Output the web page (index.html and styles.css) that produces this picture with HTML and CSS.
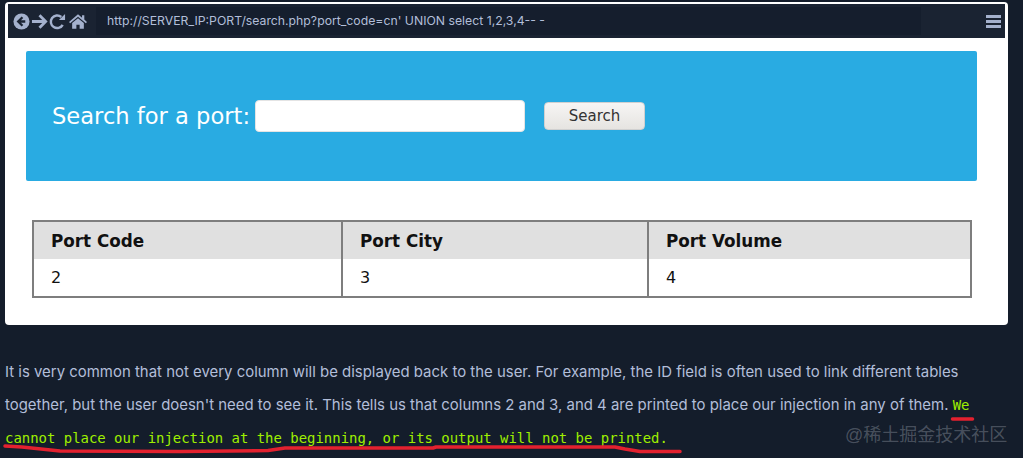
FILE: index.html
```html
<!DOCTYPE html>
<html lang="en">
<head>
<meta charset="utf-8">
<title>Search for a port</title>
<link rel="stylesheet" href="styles.css">
</head>
<body>
<div class="shot">
  <div class="toolbar">
    <div class="nav-icons">
      <svg class="icon" viewBox="0 0 18 18"><circle cx="9" cy="9" r="8.500" fill="#a4b1cd"/><path d="M10 4.500 5.500 9l4.500 4.500M6 9h7" fill="none" stroke="#1a2332" stroke-width="2.400"/></svg>
      <svg class="icon" viewBox="0 0 18 18"><path d="M9 2.500 15.500 9 9 15.500M15 9H1" fill="none" stroke="#a4b1cd" stroke-width="3"/></svg>
      <svg class="icon" viewBox="0 0 18 18"><path d="M14.500 12.500A6.700 6.700 0 1 1 13 4.200" fill="none" stroke="#a4b1cd" stroke-width="2.600"/><path d="M10.500 7.500h6.500v-6.500z" fill="#a4b1cd"/></svg>
      <svg class="icon home" viewBox="0 0 20 18"><path d="M10 1 0 9.500l1.300 1.500L10 3.700l8.700 7.300L20 9.500l-3-2.600V2h-2.500v2.800z" fill="#a4b1cd"/><path d="M10 5.300 3.500 10.700V17h4.700v-4.500h3.600V17h4.700v-6.300z" fill="#a4b1cd"/></svg>
    </div>
    <div class="url">http://SERVER_IP:PORT/search.php?port_code=cn' UNION select 1,2,3,4-- -</div>
    <div class="menu"><span></span><span></span><span></span></div>
  </div>
  <div class="page">
    <form class="search">
      <label class="search-label" for="port">Search for a port:</label>
      <input class="search-input" id="port" type="text">
      <button class="search-button" type="button">Search</button>
    </form>
    <table class="ports">
      <thead>
        <tr><th class="col-a">Port Code</th><th class="col-b">Port City</th><th>Port Volume</th></tr>
      </thead>
      <tbody>
        <tr><td>2</td><td>3</td><td>4</td></tr>
      </tbody>
    </table>
  </div>
</div>
<p class="copy">It is very common that not every column will be displayed back to the user. For example, the ID field is often used to link different tables together, but the user doesn't need to see it. This tells us that columns 2 and 3, and 4 are printed to place our injection in any of them. <code class="hl">We cannot place our injection at the beginning, or its output will not be printed.</code></p>
<svg class="scribble" viewBox="0 0 1023 458" aria-hidden="true">
  <path class="thin" d="M952.500 419h20" />
  <path d="M5 446L22 447L60 451L180 451.500L268 450.500L285 448L433 448L436 447L615 447L625 449L640 451.500L680 451.500" />
</svg>
<div class="watermark">@稀土掘金技术社区</div>
</body>
</html>
```

FILE: styles.css
```css
* { box-sizing: border-box; }
html, body { margin: 0; height: 458px; overflow: hidden; }
body {
  position: relative;
  background: #141d2b;
  color: #b2bed9;
  font-family: Inter, "Liberation Sans", sans-serif;
}
.shot {
  width: 1003px;
  height: 323px;
  margin: 2px 0 0 5px;
  padding: 2px 3px 0;
  background: #fff;
  border-radius: 4px;
}
.toolbar {
  display: flex;
  align-items: center;
  height: 34px;
  background: #1a2332;
  padding: 0 4px 0 5px;
}
.nav-icons { display: flex; align-items: center; gap: 1px; width: 83px; }
.icon { width: 17px; height: 17px; }
.icon.home { width: 18px; margin-left: 2px; }
.url {
  flex: 1;
  height: 28px;
  line-height: 28px;
  padding-left: 11px;
  background: #151e2d;
  color: #b2bed9;
  font-size: 12.250px;
  white-space: nowrap;
}
.menu { display: flex; flex-direction: column; gap: 2px; width: 15px; margin-left: 65px; }
.menu span { height: 3px; background: #a4b1cd; }
.page { padding: 13px 28px 0 18px; }
.search {
  display: flex;
  align-items: center;
  height: 130px;
  padding: 0 0 0 26px;
  background: #29abe2;
  border-radius: 2px;
  font-family: "DejaVu Sans", sans-serif;
}
.search-label { color: #fff; font-size: 22.600px; width: 203px; white-space: nowrap; }
.search-input {
  width: 270px;
  height: 32px;
  border: 1px solid #e4e4e4;
  border-radius: 4px;
  background: #fff;
}
.search-button {
  width: 101px;
  height: 28px;
  margin-left: 19px;
  border: 1px solid #d0d0d0;
  border-radius: 4px;
  background: linear-gradient(#f6f5f4, #e6e4e1);
  color: #333;
  font-family: "DejaVu Sans", sans-serif;
  font-size: 15px;
}
.ports {
  width: 940px;
  height: 78px;
  margin: 39px 0 0 6px;
  border-collapse: collapse;
  border: 2px solid #7e7e7e;
  table-layout: fixed;
  color: #111;
  font-family: "DejaVu Sans", sans-serif;
  font-size: 16px;
  text-align: left;
}
.ports th, .ports td { padding: 0 0 0 17px; border-left: 2px solid #7e7e7e; height: 38px; }
.ports th { background: #e0e0e0; font-weight: 700; font-size: 16.800px; }
.ports td { background: #fff; }
.col-a { width: 309px; }
.col-b { width: 306px; }
.copy {
  margin: 31px 0 0;
  padding: 0 5px;
  width: 1005px;
  font-size: 14.950px;
  line-height: 33px;
}
.hl {
  color: #9fef00;
  font-family: "DejaVu Sans Mono", "Liberation Mono", monospace;
  font-size: 13.950px;
  line-height: 1;
}
.scribble {
  position: absolute;
  inset: 0;
  width: 1023px;
  height: 458px;
  pointer-events: none;
}
.scribble path { fill: none; stroke: #e3212f; stroke-width: 3.500; stroke-linejoin: round; stroke-linecap: round; }
.watermark {
  position: absolute;
  left: 845px;
  top: 420px;
  color: rgba(200, 205, 215, 0.3);
  font-family: "Liberation Sans", "Noto Sans CJK SC", sans-serif;
  font-size: 18px;
  white-space: nowrap;
}
```
